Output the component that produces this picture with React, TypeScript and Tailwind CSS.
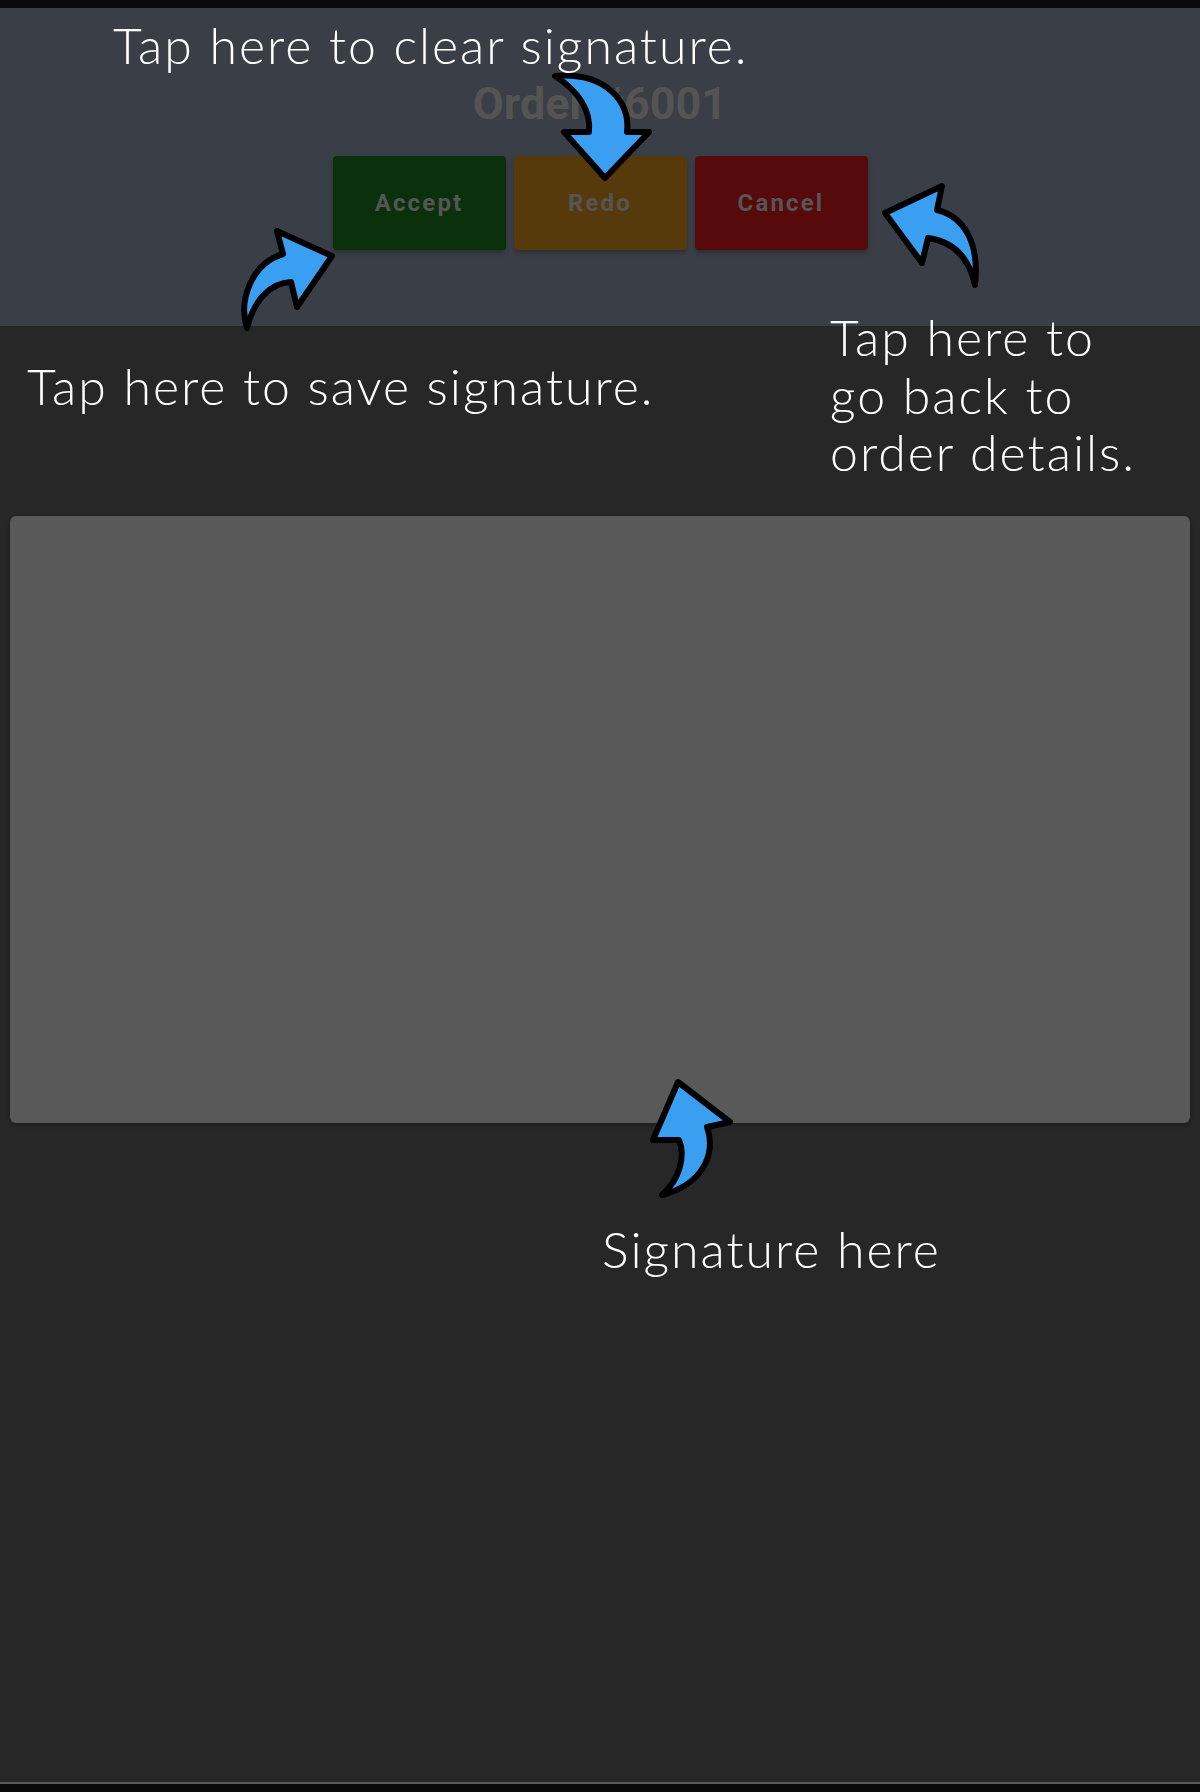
import React from "react";

const annot = "absolute whitespace-nowrap text-white font-light text-[50px] tracking-[2px] [font-family:Lato,'Noto_Sans',sans-serif]";

function Arrows() {
  const common = {
    fill: "#3a9ff1",
    stroke: "#000",
    strokeWidth: 6,
    strokeLinejoin: "round" as const,
  };
  return (
    <svg
      className="pointer-events-none absolute left-0 top-0"
      width={1200}
      height={1792}
      viewBox="0 0 1200 1792"
    >
      {/* Redo: curved down arrow */}
      <path
        {...common}
        d="M555 76 C606 72 631 102 627 132 L649 132 L605 178 L564 132 L589 132 C591 112 580 92 555 76 Z"
      />
      {/* Accept: curved arrow pointing up-right */}
      <path
        {...common}
        d="M247 328 C238 300 252 263 283 254 L277 231 L332 256 L297 307 L291 282 C270 283 254 300 247 328 Z"
      />
      {/* Cancel: curved arrow pointing up-left */}
      <path
        {...common}
        d="M885 213 L942 186 L937 210 C962 216 980 240 975 285 C970 262 957 242 928 238 L922 263 Z"
      />
      {/* Signature: curved arrow pointing up */}
      <path
        {...common}
        d="M678 1082 L730 1122 L707 1127 C716 1153 704 1184 662 1195 C679 1180 686 1157 679 1140 L653 1140 Z"
      />
    </svg>
  );
}

export default function App() {
  return (
    <div className="relative w-[1200px] h-[1792px] overflow-hidden bg-[#272727] flex flex-col [font-family:Roboto,'Liberation_Sans',sans-serif]">
      <div className="h-[8px] bg-[#0a0a0a] shrink-0" />
      <header className="h-[318px] shrink-0 bg-[#3a3e46] flex flex-col items-center pt-[74px]">
        <h1 className="text-[45px] leading-[44px] font-bold text-[#545454]">Order #6001</h1>
        <div className="mt-[30px] flex gap-[8px]">
          <button className="w-[173px] h-[94px] rounded-[4px] bg-[#0a300c] text-[24px] font-bold tracking-[0.09em] text-[#555] shadow-[0_3px_4px_rgba(0,0,0,0.25)]">
            Accept
          </button>
          <button className="w-[173px] h-[94px] rounded-[4px] bg-[#573a0c] text-[24px] font-bold tracking-[0.09em] text-[#555] shadow-[0_3px_4px_rgba(0,0,0,0.25)]">
            Redo
          </button>
          <button className="w-[173px] h-[94px] rounded-[4px] bg-[#570a0c] text-[24px] font-bold tracking-[0.09em] text-[#555] shadow-[0_3px_4px_rgba(0,0,0,0.25)]">
            Cancel
          </button>
        </div>
      </header>
      <main className="flex-1 px-[10px] pt-[190px]">
        <div className="h-[607px] rounded-[6px] bg-[#595959] shadow-[0_2px_4px_rgba(0,0,0,0.3)]" />
      </main>
      <div className="h-[2px] bg-[#5a5a5a] shrink-0" />
      <div className="h-[8px] bg-[#0a0a0a] shrink-0" />

      <Arrows />

      <div className={annot + " leading-none"} style={{ left: 113, top: 20 }}>Tap here to clear signature.</div>
      <div className={annot + " leading-none"} style={{ left: 27, top: 361 }}>Tap here to save signature.</div>
      <div className={annot + " leading-[57.5px]"} style={{ left: 830, top: 309 }}>
        Tap here to<br />go back to<br />order details.
      </div>
      <div className={annot + " leading-none"} style={{ left: 602, top: 1224 }}>Signature here</div>
    </div>
  );
}
